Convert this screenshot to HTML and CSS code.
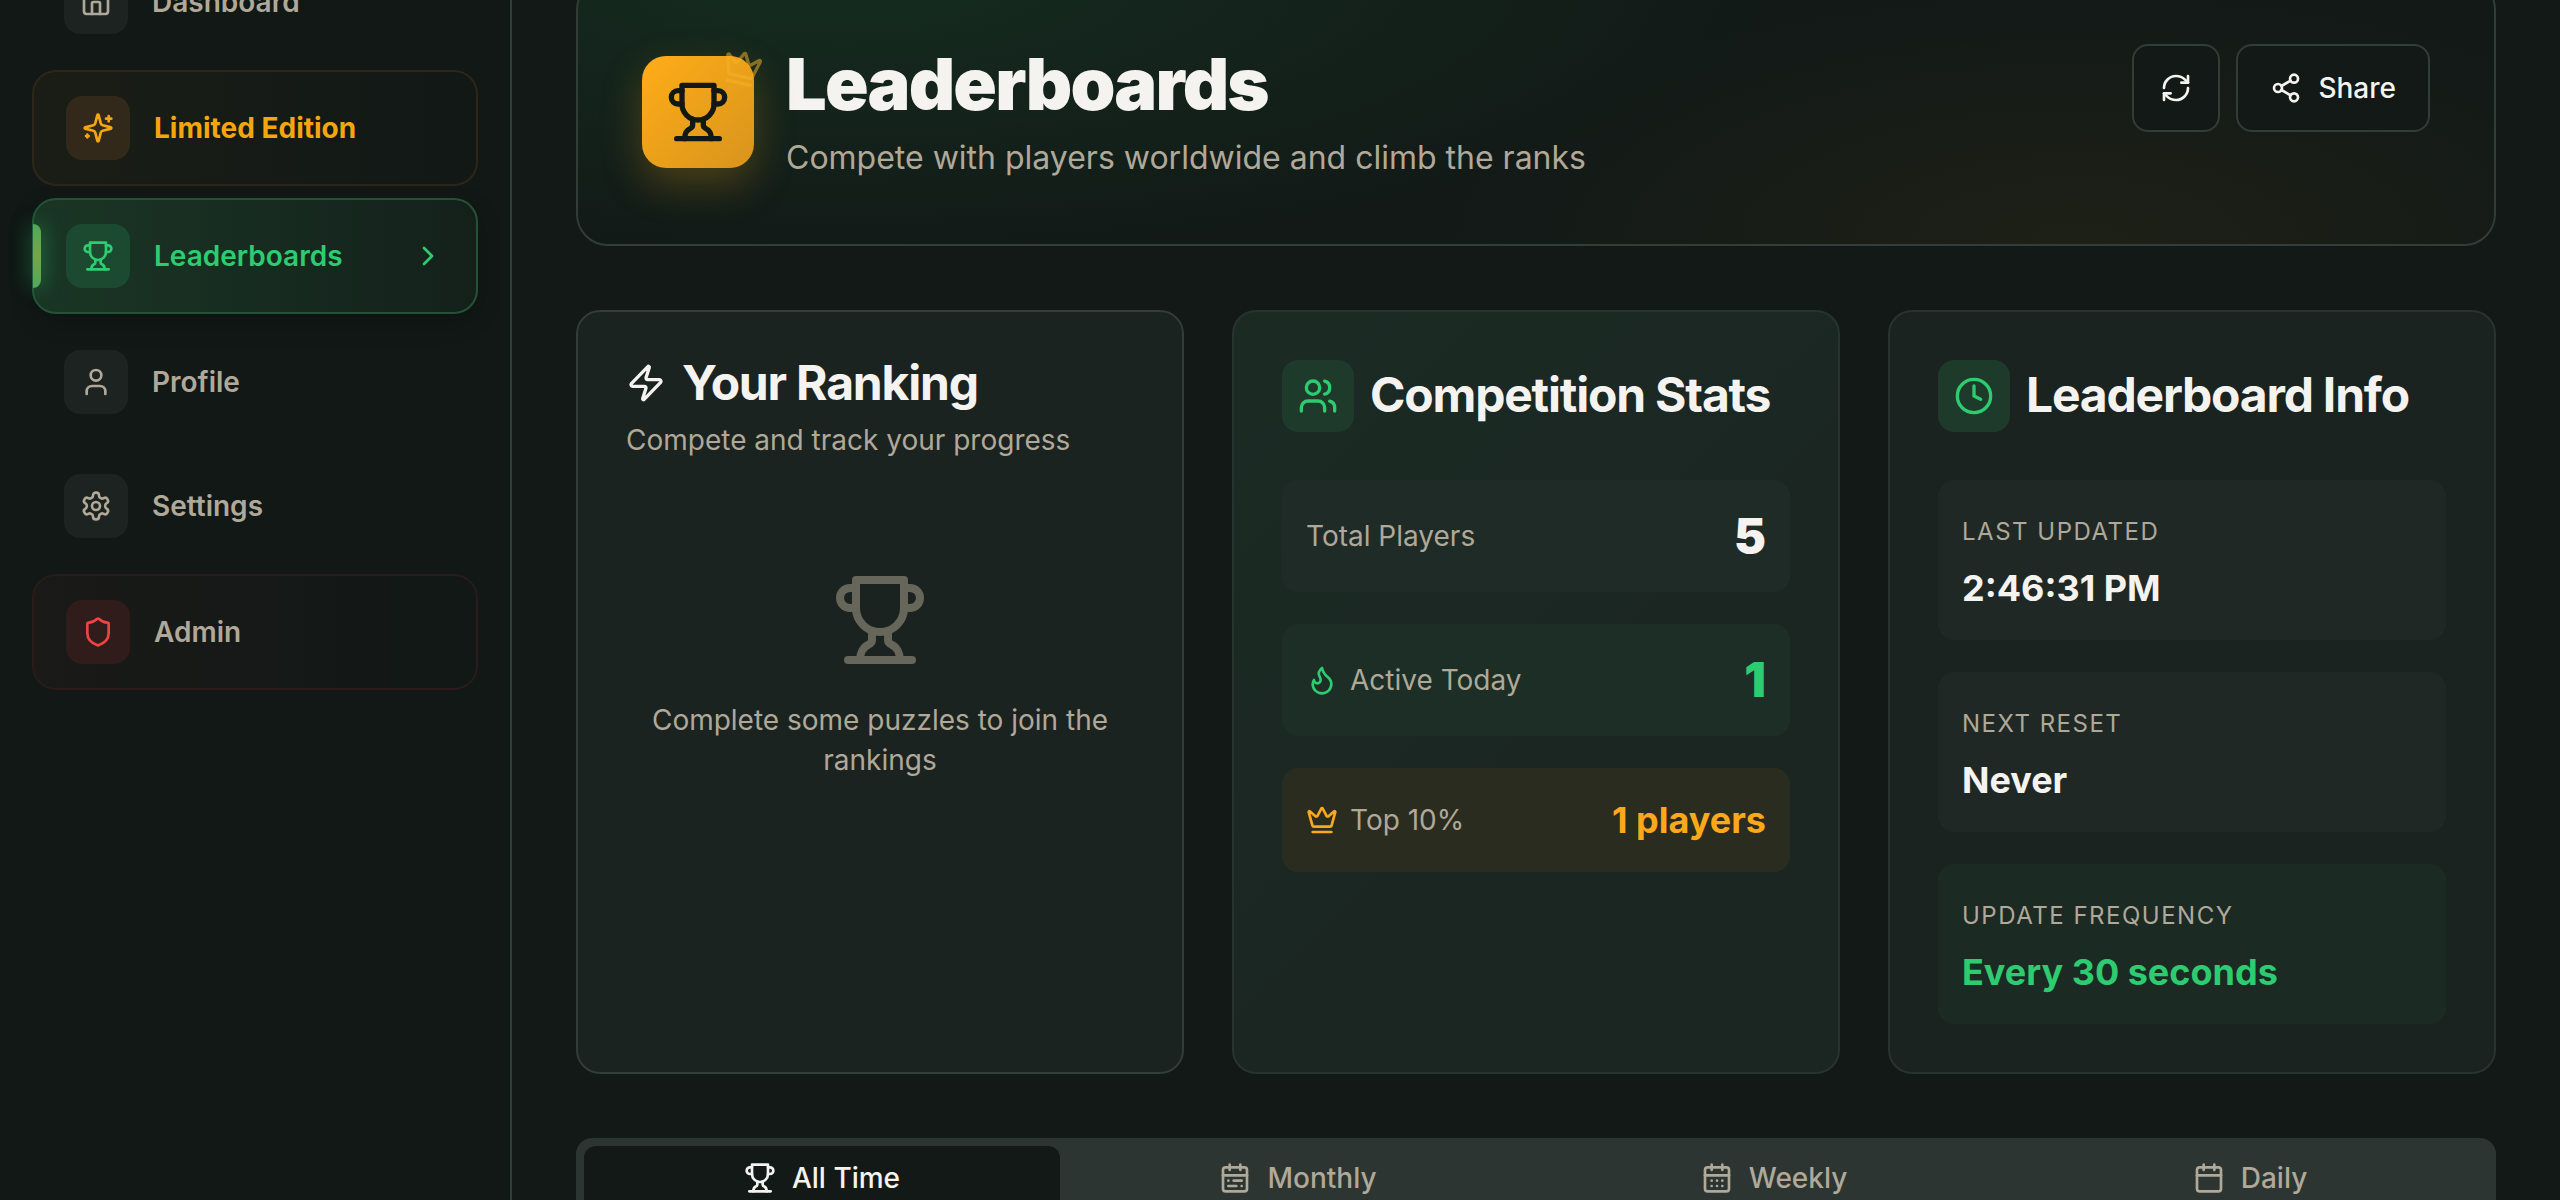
FILE: index.html
```html
<!DOCTYPE html>
<html lang="en">
<head>
    <meta charset="UTF-8">
    <meta name="viewport" content="width=device-width, initial-scale=1.0">
    <title>Leaderboards</title>
    <link rel="stylesheet" href="styles.css">
</head>
<body>
    <svg class="sprite" xmlns="http://www.w3.org/2000/svg">
        <symbol id="i-house" viewBox="0 0 24 24"><path d="M15 21v-8a1 1 0 0 0-1-1h-4a1 1 0 0 0-1 1v8"/><path d="M3 10a2 2 0 0 1 .709-1.528l7-5.999a2 2 0 0 1 2.582 0l7 5.999A2 2 0 0 1 21 10v9a2 2 0 0 1-2 2H5a2 2 0 0 1-2-2z"/></symbol>
        <symbol id="i-sparkles" viewBox="0 0 24 24"><path d="M9.937 15.5A2 2 0 0 0 8.5 14.063l-6.135-1.582a.5.5 0 0 1 0-.962L8.5 9.936A2 2 0 0 0 9.937 8.5l1.582-6.135a.5.5 0 0 1 .963 0L14.063 8.5A2 2 0 0 0 15.5 9.937l6.135 1.581a.5.5 0 0 1 0 .964L15.5 14.063a2 2 0 0 0-1.437 1.437l-1.582 6.135a.5.5 0 0 1-.963 0z"/><path d="M20 3v4"/><path d="M22 5h-4"/><path d="M4 17v2"/><path d="M5 18H3"/></symbol>
        <symbol id="i-trophy" viewBox="0 0 24 24"><path d="M6 9H4.5a2.5 2.5 0 0 1 0-5H6"/><path d="M18 9h1.5a2.5 2.5 0 0 0 0-5H18"/><path d="M4 22h16"/><path d="M10 14.66V17c0 .55-.47.98-.97 1.21C7.85 18.75 7 20.24 7 22"/><path d="M14 14.66V17c0 .55.47.98.97 1.21C16.15 18.75 17 20.24 17 22"/><path d="M18 2H6v7a6 6 0 0 0 12 0V2Z"/></symbol>
        <symbol id="i-chevron" viewBox="0 0 24 24"><path d="m9 18 6-6-6-6"/></symbol>
        <symbol id="i-user" viewBox="0 0 24 24"><path d="M19 21v-2a4 4 0 0 0-4-4H9a4 4 0 0 0-4 4v2"/><circle cx="12" cy="7" r="4"/></symbol>
        <symbol id="i-settings" viewBox="0 0 24 24"><path d="M12.22 2h-.44a2 2 0 0 0-2 2v.18a2 2 0 0 1-1 1.73l-.43.25a2 2 0 0 1-2 0l-.15-.08a2 2 0 0 0-2.73.73l-.22.38a2 2 0 0 0 .73 2.73l.15.1a2 2 0 0 1 1 1.72v.51a2 2 0 0 1-1 1.74l-.15.09a2 2 0 0 0-.73 2.73l.22.38a2 2 0 0 0 2.73.73l.15-.08a2 2 0 0 1 2 0l.43.25a2 2 0 0 1 1 1.73V20a2 2 0 0 0 2 2h.44a2 2 0 0 0 2-2v-.18a2 2 0 0 1 1-1.73l.43-.25a2 2 0 0 1 2 0l.15.08a2 2 0 0 0 2.73-.73l.22-.39a2 2 0 0 0-.73-2.73l-.15-.08a2 2 0 0 1-1-1.74v-.5a2 2 0 0 1 1-1.74l.15-.09a2 2 0 0 0 .73-2.73l-.22-.38a2 2 0 0 0-2.73-.73l-.15.08a2 2 0 0 1-2 0l-.43-.25a2 2 0 0 1-1-1.73V4a2 2 0 0 0-2-2z"/><circle cx="12" cy="12" r="3"/></symbol>
        <symbol id="i-shield" viewBox="0 0 24 24"><path d="M20 13c0 5-3.5 7.5-7.66 8.95a1 1 0 0 1-.67-.01C7.5 20.5 4 18 4 13V6a1 1 0 0 1 1-1c2 0 4.5-1.2 6.24-2.72a1.17 1.17 0 0 1 1.52 0C14.51 3.81 17 5 19 5a1 1 0 0 1 1 1z"/></symbol>
        <symbol id="i-crown" viewBox="0 0 24 24"><path d="M11.562 3.266a.5.5 0 0 1 .876 0L15.39 8.87a1 1 0 0 0 1.516.294L21.183 5.5a.5.5 0 0 1 .798.519l-2.834 10.246a1 1 0 0 1-.956.734H5.81a1 1 0 0 1-.957-.734L2.02 6.02a.5.5 0 0 1 .798-.519l4.276 3.664a1 1 0 0 0 1.516-.294z"/><path d="M5 21h14"/></symbol>
        <symbol id="i-refresh" viewBox="0 0 24 24"><path d="M3 12a9 9 0 0 1 9-9 9.75 9.75 0 0 1 6.74 2.74L21 8"/><path d="M21 3v5h-5"/><path d="M21 12a9 9 0 0 1-9 9 9.75 9.75 0 0 1-6.74-2.74L3 16"/><path d="M8 16H3v5"/></symbol>
        <symbol id="i-share" viewBox="0 0 24 24"><circle cx="18" cy="5" r="3"/><circle cx="6" cy="12" r="3"/><circle cx="18" cy="19" r="3"/><line x1="8.59" y1="13.51" x2="15.42" y2="17.49"/><line x1="15.41" y1="6.51" x2="8.59" y2="10.49"/></symbol>
        <symbol id="i-zap" viewBox="0 0 24 24"><path d="M4 14a1 1 0 0 1-.78-1.63l9.9-10.2a.5.5 0 0 1 .86.46l-1.92 6.02A1 1 0 0 0 13 10h7a1 1 0 0 1 .78 1.63l-9.9 10.2a.5.5 0 0 1-.86-.46l1.92-6.02A1 1 0 0 0 11 14z"/></symbol>
        <symbol id="i-users" viewBox="0 0 24 24"><path d="M16 21v-2a4 4 0 0 0-4-4H6a4 4 0 0 0-4 4v2"/><circle cx="9" cy="7" r="4"/><path d="M22 21v-2a4 4 0 0 0-3-3.87"/><path d="M16 3.13a4 4 0 0 1 0 7.75"/></symbol>
        <symbol id="i-clock" viewBox="0 0 24 24"><circle cx="12" cy="12" r="10"/><polyline points="12 6 12 12 16 14"/></symbol>
        <symbol id="i-flame" viewBox="0 0 24 24"><path d="M8.5 14.5A2.5 2.5 0 0 0 11 12c0-1.38-.5-2-1-3-1.072-2.143-.224-4.054 2-6 .5 2.5 2 4.9 4 6.5 2 1.6 3 3.5 3 5.5a7 7 0 1 1-14 0c0-1.153.433-2.294 1-3a2.5 2.5 0 0 0 2.5 2.5z"/></symbol>
        <symbol id="i-cal-range" viewBox="0 0 24 24"><rect width="18" height="18" x="3" y="4" rx="2"/><path d="M16 2v4"/><path d="M3 10h18"/><path d="M8 2v4"/><path d="M17 14h-6"/><path d="M13 18H7"/><path d="M7 14h.01"/><path d="M17 18h.01"/></symbol>
        <symbol id="i-cal-days" viewBox="0 0 24 24"><path d="M8 2v4"/><path d="M16 2v4"/><rect width="18" height="18" x="3" y="4" rx="2"/><path d="M3 10h18"/><path d="M8 14h.01"/><path d="M12 14h.01"/><path d="M16 14h.01"/><path d="M8 18h.01"/><path d="M12 18h.01"/><path d="M16 18h.01"/></symbol>
        <symbol id="i-calendar" viewBox="0 0 24 24"><path d="M8 2v4"/><path d="M16 2v4"/><rect width="18" height="18" x="3" y="4" rx="2"/><path d="M3 10h18"/></symbol>
    </svg>

    <div class="app">
        <aside class="sidebar">
            <nav class="nav">
                <a class="nav-item">
                    <span class="nav-icon"><svg class="icon"><use href="#i-house"/></svg></span>
                    <span>Dashboard</span>
                </a>
                <a class="nav-item nav-limited">
                    <span class="nav-icon"><svg class="icon"><use href="#i-sparkles"/></svg></span>
                    <span>Limited Edition</span>
                </a>
                <a class="nav-item nav-active">
                    <span class="nav-marker"></span>
                    <span class="nav-icon"><svg class="icon"><use href="#i-trophy"/></svg></span>
                    <span>Leaderboards</span>
                    <svg class="icon nav-chevron"><use href="#i-chevron"/></svg>
                </a>
                <a class="nav-item">
                    <span class="nav-icon"><svg class="icon"><use href="#i-user"/></svg></span>
                    <span>Profile</span>
                </a>
                <a class="nav-item">
                    <span class="nav-icon"><svg class="icon"><use href="#i-settings"/></svg></span>
                    <span>Settings</span>
                </a>
                <a class="nav-item nav-admin">
                    <span class="nav-icon"><svg class="icon"><use href="#i-shield"/></svg></span>
                    <span>Admin</span>
                </a>
            </nav>
        </aside>

        <main class="main">
            <header class="hero">
                <div class="hero-left">
                    <div class="hero-badge">
                        <svg class="icon hero-trophy"><use href="#i-trophy"/></svg>
                        <svg class="icon hero-crown"><use href="#i-crown"/></svg>
                    </div>
                    <div>
                        <h1 class="hero-title">Leaderboards</h1>
                        <p class="hero-sub">Compete with players worldwide and climb the ranks</p>
                    </div>
                </div>
                <div class="hero-actions">
                    <button class="btn btn-square"><svg class="icon"><use href="#i-refresh"/></svg></button>
                    <button class="btn"><svg class="icon"><use href="#i-share"/></svg>Share</button>
                </div>
            </header>

            <section class="cards">
                <div class="card card-rank">
                    <h2 class="rank-title"><svg class="icon icon-40"><use href="#i-zap"/></svg>Your Ranking</h2>
                    <p class="rank-sub">Compete and track your progress</p>
                    <div class="rank-empty">
                        <svg class="icon rank-trophy"><use href="#i-trophy"/></svg>
                        <p>Complete some puzzles to join the rankings</p>
                    </div>
                </div>

                <div class="card card-stats">
                    <div class="card-head">
                        <span class="head-icon"><svg class="icon icon-40"><use href="#i-users"/></svg></span>
                        <h2>Competition Stats</h2>
                    </div>
                    <div class="rows">
                        <div class="stat">
                            <span class="stat-label">Total Players</span>
                            <span class="stat-num">5</span>
                        </div>
                        <div class="stat stat-green">
                            <span class="stat-label"><svg class="icon"><use href="#i-flame"/></svg>Active Today</span>
                            <span class="stat-num">1</span>
                        </div>
                        <div class="stat stat-amber">
                            <span class="stat-label"><svg class="icon"><use href="#i-crown"/></svg>Top 10%</span>
                            <span class="stat-small">1 players</span>
                        </div>
                    </div>
                </div>

                <div class="card card-info">
                    <div class="card-head">
                        <span class="head-icon"><svg class="icon icon-40"><use href="#i-clock"/></svg></span>
                        <h2>Leaderboard Info</h2>
                    </div>
                    <div class="rows">
                        <div class="info">
                            <div class="info-label">Last Updated</div>
                            <div class="info-value">2:46:31 PM</div>
                        </div>
                        <div class="info">
                            <div class="info-label">Next Reset</div>
                            <div class="info-value">Never</div>
                        </div>
                        <div class="info info-green">
                            <div class="info-label">Update Frequency</div>
                            <div class="info-value">Every 30 seconds</div>
                        </div>
                    </div>
                </div>
            </section>

            <div class="tabs">
                <button class="tab tab-active"><svg class="icon"><use href="#i-trophy"/></svg>All Time</button>
                <button class="tab"><svg class="icon"><use href="#i-cal-range"/></svg>Monthly</button>
                <button class="tab"><svg class="icon"><use href="#i-cal-days"/></svg>Weekly</button>
                <button class="tab"><svg class="icon"><use href="#i-calendar"/></svg>Daily</button>
            </div>
        </main>
    </div>
</body>
</html>
```

FILE: styles.css
```css
* {
    box-sizing: border-box;
}

html, body {
    margin: 0;
    height: 1200px;
    overflow: hidden;
}

body {
    background-color: #121917;
    color: #f5f3ef;
    font-family: Inter, "Noto Sans", sans-serif;
}

h1, h2, p {
    margin: 0;
}

.sprite {
    display: none;
}

.icon {
    width: 32px;
    height: 32px;
    flex-shrink: 0;
    fill: none;
    stroke: currentColor;
    stroke-width: 2;
    stroke-linecap: round;
    stroke-linejoin: round;
}

.icon-40 {
    width: 40px;
    height: 40px;
}

.app {
    display: flex;
    height: 1200px;
}

/* sidebar */
.sidebar {
    width: 512px;
    flex-shrink: 0;
    padding: 0 32px;
    background-color: #111816;
    border-right: 2px solid #323c39;
}

.nav {
    display: flex;
    flex-direction: column;
    gap: 12px;
    margin-top: -54px;
}

.nav-item {
    position: relative;
    display: flex;
    align-items: center;
    gap: 24px;
    height: 112px;
    padding: 0 32px;
    border-radius: 24px;
    color: #b0a898;
    font-size: 28px;
    line-height: 40px;
    font-weight: 600;
}

.nav-icon {
    display: flex;
    align-items: center;
    justify-content: center;
    width: 64px;
    height: 64px;
    border-radius: 16px;
    background-color: #1c2321;
}

.nav-limited,
.nav-active,
.nav-admin {
    height: 116px;
    border: 2px solid transparent;
}

.nav-limited {
    color: #f5a50f;
    font-weight: 700;
    border-color: #2e2719;
    background: linear-gradient(90deg, rgba(245, 165, 15, 0.04), rgba(245, 165, 15, 0));
}

.nav-limited .nav-icon {
    background-color: #32291a;
}

.nav-active {
    color: #2ecc71;
    border-color: #235236;
    background: linear-gradient(90deg, #1a3625, #14211b);
    box-shadow: 0 8px 24px rgba(0, 0, 0, 0.2);
}

.nav-active .nav-icon {
    background-color: #1c4a30;
}

.nav-marker {
    position: absolute;
    left: -1px;
    top: 24px;
    width: 8px;
    height: 64px;
    border-radius: 0 8px 8px 0;
    background: linear-gradient(180deg, #4fa95c, #77a548 50%, #4fa95c);
    box-shadow: 0 0 20px rgba(46, 204, 113, 0.6);
}

.nav-chevron {
    margin-left: auto;
}

.nav-admin {
    border-color: #2b1b1b;
    background: linear-gradient(90deg, rgba(239, 68, 68, 0.04), rgba(239, 68, 68, 0));
}

.nav-admin .nav-icon {
    background-color: #301c1a;
    color: #ef4444;
}

/* main */
.main {
    flex: 1;
    min-width: 0;
    padding: 0 64px;
}

.hero {
    display: flex;
    justify-content: space-between;
    align-items: flex-start;
    margin-top: -22px;
    padding: 64px;
    border: 2px solid #323c39;
    border-radius: 32px;
    background:
        radial-gradient(ellipse 950px 280px at 260px 0, #152c1f, rgba(21, 44, 31, 0)),
        radial-gradient(ellipse 650px 260px at 1500px 100%, rgba(245, 165, 15, 0.05), rgba(245, 165, 15, 0)),
        #121917;
}

.hero-left {
    display: flex;
    align-items: center;
    gap: 32px;
}

.hero-badge {
    position: relative;
    display: flex;
    align-items: center;
    justify-content: center;
    width: 112px;
    height: 112px;
    border-radius: 24px;
    background: linear-gradient(135deg, #ffad18, #d8941c);
    box-shadow: 0 16px 40px rgba(245, 165, 15, 0.25);
    color: #111816;
}

.hero-trophy {
    width: 64px;
    height: 64px;
}

.hero-crown {
    position: absolute;
    top: -8px;
    right: -8px;
    width: 40px;
    height: 40px;
    color: #f5b52a;
    opacity: 0.5;
    transform: rotate(12deg);
}

.hero-title {
    font-size: 72px;
    line-height: 80px;
    font-weight: 900;
    letter-spacing: -1.8px;
}

.hero-sub {
    margin-top: 12px;
    font-size: 32px;
    line-height: 44px;
    color: #b0a898;
}

.hero-actions {
    display: flex;
    gap: 16px;
}

.btn {
    display: flex;
    align-items: center;
    gap: 16px;
    height: 88px;
    padding: 0 32px;
    border: 2px solid #323c39;
    border-radius: 16px;
    background-color: #121917;
    color: #f5f3ef;
    font-family: inherit;
    font-size: 28px;
    font-weight: 500;
}

.btn-square {
    width: 88px;
    padding: 0;
    justify-content: center;
}

/* cards */
.cards {
    display: grid;
    grid-template-columns: repeat(3, 1fr);
    gap: 48px;
    margin-top: 64px;
}

.card {
    height: 764px;
    padding: 48px;
    border: 2px solid #28322f;
    border-radius: 24px;
    background-color: #1b2320;
}

.card-rank {
    border-color: #323c39;
}

.card-stats {
    background: linear-gradient(135deg, #1b2b24, #1b2522 70%);
}

.rank-title {
    display: flex;
    align-items: center;
    gap: 16px;
    font-size: 48px;
    line-height: 46px;
    font-weight: 700;
    letter-spacing: -1.2px;
}

.rank-sub {
    margin-top: 14px;
    font-size: 28px;
    line-height: 40px;
    color: #b0a898;
}

.rank-empty {
    margin-top: 112px;
    text-align: center;
    font-size: 28px;
    line-height: 40px;
    color: #b0a898;
}

.rank-trophy {
    display: block;
    width: 96px;
    height: 96px;
    margin: 0 auto 32px;
    color: #66665a;
}

.card-head {
    display: flex;
    align-items: center;
    gap: 16px;
    margin-bottom: 48px;
}

.card-head h2 {
    margin-top: -2px;
    font-size: 48px;
    line-height: 64px;
    font-weight: 700;
    letter-spacing: -1.2px;
}

.head-icon {
    display: flex;
    align-items: center;
    justify-content: center;
    width: 72px;
    height: 72px;
    border-radius: 16px;
    background-color: #1e3a2b;
    color: #2ecc71;
}

.rows {
    display: flex;
    flex-direction: column;
    gap: 32px;
}

.stat {
    display: flex;
    align-items: center;
    justify-content: space-between;
    padding: 24px;
    border-radius: 16px;
    background-color: #1f2b27;
}

.stat-label {
    display: flex;
    align-items: center;
    gap: 12px;
    font-size: 28px;
    line-height: 40px;
    color: #b0a898;
}

.stat-num {
    font-size: 48px;
    line-height: 64px;
    font-weight: 900;
}

.stat-small {
    font-size: 36px;
    line-height: 56px;
    font-weight: 700;
}

.stat-green {
    background-color: #1c2e25;
}

.stat-green .icon,
.stat-green .stat-num {
    color: #2ecc71;
}

.stat-amber {
    background-color: #2b2c20;
}

.stat-amber .icon,
.stat-amber .stat-small {
    color: #fba91a;
}

.info {
    height: 160px;
    padding: 36px 24px 24px;
    border-radius: 16px;
    background-color: #1f2825;
}

.info-label {
    margin-bottom: 12px;
    font-size: 24px;
    line-height: 32px;
    font-weight: 400;
    letter-spacing: 1.5px;
    text-transform: uppercase;
    color: #b0a898;
}

.info-value {
    font-size: 36px;
    line-height: 56px;
    font-weight: 700;
}

.info-green {
    background-color: #1c2a24;
}

.info-green .info-value {
    color: #2ecc71;
}

/* tabs */
.tabs {
    display: grid;
    grid-template-columns: repeat(4, 1fr);
    margin-top: 64px;
    padding: 8px;
    border-radius: 16px;
    background-color: #2c3532;
}

.tab {
    display: flex;
    align-items: center;
    justify-content: center;
    gap: 16px;
    height: 64px;
    border: none;
    border-radius: 12px;
    background: none;
    color: #b0a898;
    font-family: inherit;
    font-size: 28px;
    font-weight: 500;
}

.tab-active {
    background-color: #121917;
    color: #f5f3ef;
}
```
